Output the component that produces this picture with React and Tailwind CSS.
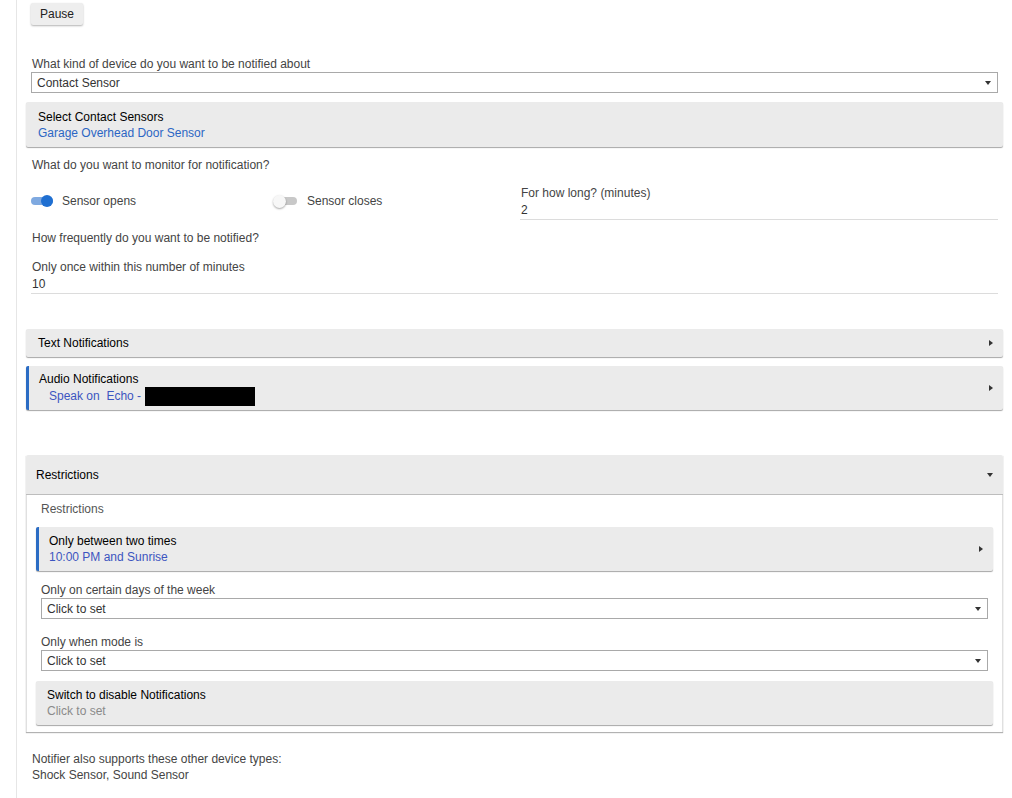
const blue = "text-[#2b66c4]";

function Caret({ down }) {
  return down ? (
    <span className="w-0 h-0 border-l-[3px] border-r-[3px] border-t-[4px] border-l-transparent border-r-transparent border-t-[#333]"></span>
  ) : (
    <span className="w-0 h-0 border-t-[3px] border-b-[3px] border-l-[4px] border-t-transparent border-b-transparent border-l-[#333]"></span>
  );
}

function Select({ value }) {
  return (
    <div className="flex items-center justify-between h-[21px] border border-[#a9a9a9] bg-white pl-[5px] pr-[6px]">
      <span className="text-[#333]">{value}</span>
      <Caret down />
    </div>
  );
}

function Toggle({ on }) {
  return (
    <div className="relative w-[22px] h-[14px] flex items-center">
      <div className={"w-[22px] h-[8px] rounded-full " + (on ? "bg-[#7fa9e0]" : "bg-[#c8c8c8]")}></div>
      {on ? (
        <div className="absolute right-0 w-[12px] h-[12px] rounded-full bg-[#1f6fd1]"></div>
      ) : (
        <div className="absolute left-[-2px] w-[13px] h-[13px] rounded-full bg-[#f7f7f7] shadow-[0_1px_2px_rgba(0,0,0,0.35)]"></div>
      )}
    </div>
  );
}

function Card({ title, sub, subClass, accent, arrow, className }) {
  return (
    <div
      className={
        "flex items-center justify-between bg-[#ebebeb] shadow-[0_1px_1px_rgba(0,0,0,0.35)] rounded-[2px] " +
        (accent ? "border-l-[3px] border-[#2b6cc4] " : "") +
        className
      }
    >
      <div className="flex flex-col">
        <span className="text-black leading-[16px]">{title}</span>
        {sub && <span className={"leading-[16px] " + subClass}>{sub}</span>}
      </div>
      {arrow && <Caret />}
    </div>
  );
}

export default function App() {
  return (
    <div
      className="min-h-[798px] w-[1012px] bg-white text-[12px] text-[#444]"
      style={{ fontFamily: '"Liberation Sans", Arial, sans-serif' }}
    >
      <div className="ml-[16px] min-h-[798px] border-l border-[#e6e6e6] pl-[9px] pr-[9px] pt-[3px] pb-[16px]">
        <div className="pl-[5px]">
          <button className="h-[22px] px-[9px] bg-[#eeeeee] text-[#222] rounded-[2px] shadow-[0_1px_2px_rgba(0,0,0,0.3)]">
            Pause
          </button>
        </div>

        <div className="mt-[32px] px-[5px]">
          <div className="leading-[14px] pl-[1px]">What kind of device do you want to be notified about</div>
          <div className="mt-[1px]">
            <Select value="Contact Sensor" />
          </div>
        </div>

        <Card
          className="mt-[9px] h-[45px] pl-[12px] pr-[10px]"
          title="Select Contact Sensors"
          sub="Garage Overhead Door Sensor"
          subClass={blue}
        />

        <div className="px-[5px]">
          <div className="mt-[11px] pl-[1px] leading-[14px]">What do you want to monitor for notification?</div>

          <div className="flex mt-[14px]">
            <div className="w-[244px] flex items-center gap-[9px] h-[30px]">
              <Toggle on />
              <span>Sensor opens</span>
            </div>
            <div className="w-[244px] flex items-center gap-[10px] h-[30px]">
              <Toggle />
              <span>Sensor closes</span>
            </div>
            <div className="flex-1 pl-[1px]">
              <div className="pl-[1px] leading-[14px]">For how long? (minutes)</div>
              <div className="pl-[1px] h-[20px] leading-[20px] border-b border-[#dcdcdc] text-[#333]">2</div>
            </div>
          </div>

          <div className="mt-[11px] pl-[1px] leading-[14px]">How frequently do you want to be notified?</div>
          <div className="mt-[15px] pl-[1px] leading-[14px]">Only once within this number of minutes</div>
          <div className="pl-[1px] h-[20px] leading-[20px] border-b border-[#dcdcdc] text-[#333]">10</div>
        </div>

        <Card
          className="mt-[35px] h-[28px] pl-[12px] pr-[10px]"
          title="Text Notifications"
          arrow
        />

        <Card
          className="mt-[9px] h-[44px] pl-[10px] pr-[10px]"
          accent
          arrow
          title="Audio Notifications"
          sub={
            <span className="flex items-center pl-[10px]">
              <span className="whitespace-pre">Speak on  Echo - </span>
              <span className="inline-block w-[110px] h-[19px] bg-black ml-[1px]"></span>
            </span>
          }
          subClass="text-[#3c55c0]"
        />

        <div className="mt-[45px] shadow-[0_1px_1px_rgba(0,0,0,0.3)]">
          <div className="flex items-center justify-between h-[40px] bg-[#ebebeb] border-b border-[#bdbdbd] pl-[10px] pr-[10px] pt-[1px] rounded-t-[2px]">
            <span className="text-black">Restrictions</span>
            <Caret down />
          </div>
          <div className="border-x border-[#e0e0e0] px-[9px] pt-[7px] pb-[7px]">
            <div className="pl-[5px] leading-[14px] text-[#555]">Restrictions</div>
            <Card
              className="mt-[11px] h-[44px] pl-[10px] pr-[10px]"
              accent
              arrow
              title="Only between two times"
              sub="10:00 PM and Sunrise"
              subClass="text-[#3c55c0]"
            />
            <div className="px-[5px] mt-[12px]">
              <div className="leading-[14px]">Only on certain days of the week</div>
              <div className="mt-[1px]">
                <Select value="Click to set" />
              </div>
              <div className="leading-[14px] mt-[16px]">Only when mode is</div>
              <div className="mt-[1px]">
                <Select value="Click to set" />
              </div>
            </div>
            <Card
              className="mt-[10px] h-[44px] pl-[11px] pr-[10px]"
              title="Switch to disable Notifications"
              sub="Click to set"
              subClass="text-[#8a8a8a]"
            />
          </div>
        </div>

        <div className="mt-[19px] pl-[6px] leading-[16px]">
          <div>Notifier also supports these other device types:</div>
          <div>Shock Sensor, Sound Sensor</div>
        </div>
      </div>
    </div>
  );
}
